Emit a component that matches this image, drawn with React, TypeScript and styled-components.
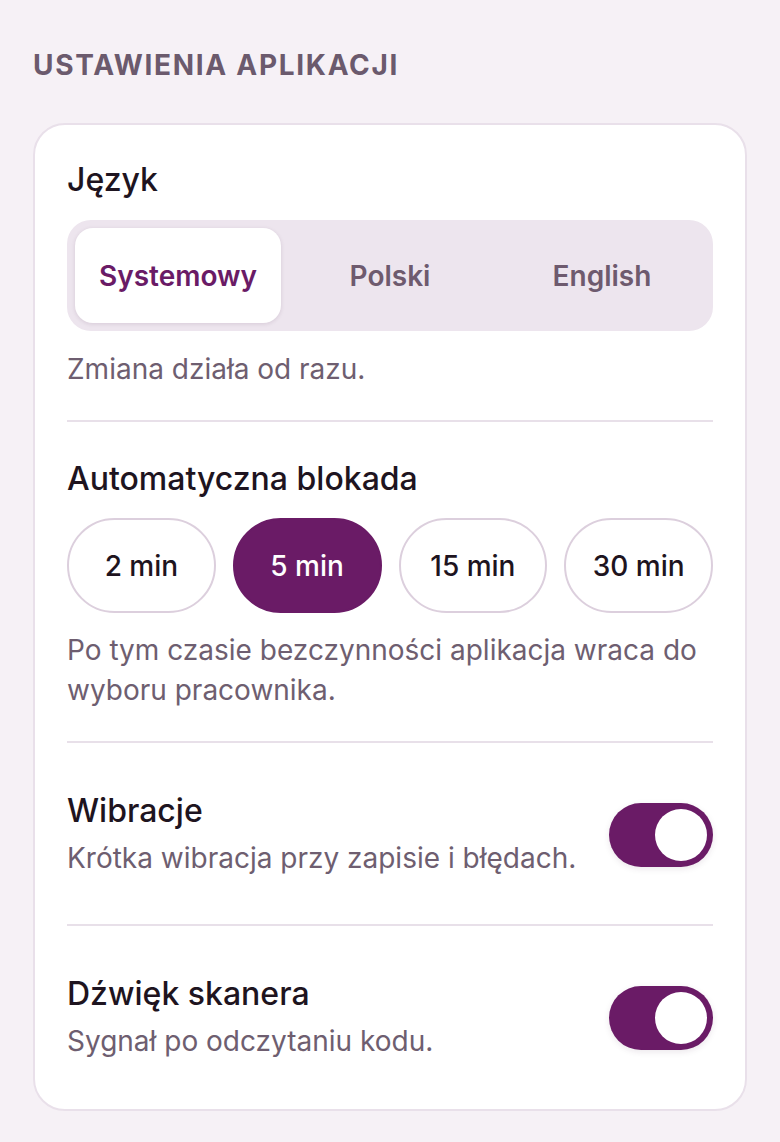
import styled, { createGlobalStyle } from "styled-components";
import { useState } from "react";

const GlobalStyle = createGlobalStyle`
    html, body {
        margin: 0;
        padding: 0;
        background: #f6f1f6;
        font-family: Inter, "Noto Sans", "Liberation Sans", sans-serif;
    }
    * { box-sizing: border-box; }
`;

const languages = ["Systemowy", "Polski", "English"];
const lockTimes = ["2 min", "5 min", "15 min", "30 min"];

const App = () => {
    const [lang, setLang] = useState("Systemowy");
    const [lock, setLock] = useState("5 min");
    const [vibrate, setVibrate] = useState(true);
    const [sound, setSound] = useState(true);

    return (
        <Page>
            <GlobalStyle />
            <Heading>Ustawienia aplikacji</Heading>
            <Card>
                <Section>
                    <Title>Język</Title>
                    <Segmented>
                        {languages.map((l) => (
                            <Segment key={l} $active={lang === l} onClick={() => setLang(l)}>
                                {l}
                            </Segment>
                        ))}
                    </Segmented>
                    <Desc>Zmiana działa od razu.</Desc>
                </Section>
                <Divider />
                <Section>
                    <Title>Automatyczna blokada</Title>
                    <Chips>
                        {lockTimes.map((t) => (
                            <Chip key={t} $active={lock === t} onClick={() => setLock(t)}>
                                {t}
                            </Chip>
                        ))}
                    </Chips>
                    <Desc>Po tym czasie bezczynności aplikacja wraca do wyboru pracownika.</Desc>
                </Section>
                <Divider />
                <ToggleRow>
                    <ToggleText>
                        <Title>Wibracje</Title>
                        <Desc>Krótka wibracja przy zapisie i błędach.</Desc>
                    </ToggleText>
                    <Switch $on={vibrate} onClick={() => setVibrate(!vibrate)}>
                        <Knob />
                    </Switch>
                </ToggleRow>
                <Divider />
                <ToggleRow>
                    <ToggleText>
                        <Title>Dźwięk skanera</Title>
                        <Desc>Sygnał po odczytaniu kodu.</Desc>
                    </ToggleText>
                    <Switch $on={sound} onClick={() => setSound(!sound)}>
                        <Knob />
                    </Switch>
                </ToggleRow>
            </Card>
        </Page>
    );
};

export default App;

const Page = styled.div`
    padding: 49px 33px 32px 33px;
`;

const Heading = styled.h2`
    margin: 0 0 42px 0;
    font-size: 28px;
    line-height: 32px;
    font-weight: 700;
    letter-spacing: 1.7px;
    text-transform: uppercase;
    color: #6b5a6d;
`;

const Card = styled.div`
    background: #fff;
    border: 2px solid #e9e0ea;
    border-radius: 32px;
    padding: 35px 32px 33px 32px;
    display: flex;
    flex-direction: column;
`;

const Section = styled.div`
    display: flex;
    flex-direction: column;
`;

const Title = styled.div`
    font-size: 32px;
    line-height: 40px;
    font-weight: 500;
    color: #1e1420;
`;

const Desc = styled.div`
    font-size: 28px;
    line-height: 40px;
    color: #6e5e70;
`;

const Segmented = styled.div`
    margin: 20px 0 18px 0;
    background: #ede5ee;
    border-radius: 24px;
    padding: 8px;
    display: grid;
    grid-template-columns: repeat(3, 1fr);
    gap: 6px;
    height: 111px;
`;

const Segment = styled.div<{ $active: boolean }>`
    display: flex;
    align-items: center;
    justify-content: center;
    border-radius: 18px;
    font-size: 28px;
    font-weight: 600;
    color: ${(p) => (p.$active ? "#6a1b66" : "#6e5a6e")};
    background: ${(p) => (p.$active ? "#fff" : "transparent")};
    box-shadow: ${(p) => (p.$active ? "0 1px 4px rgba(60, 20, 60, 0.12)" : "none")};
    cursor: pointer;
`;

const Divider = styled.div`
    flex: none;
    height: 2px;
    background: #e8e0e9;
    margin: 31px 0 37px 0;
`;

const Chips = styled.div`
    margin: 19px 0 17px 0;
    display: grid;
    grid-template-columns: repeat(4, 1fr);
    gap: 17px;
`;

const Chip = styled.div<{ $active: boolean }>`
    height: 95px;
    border-radius: 48px;
    display: flex;
    align-items: center;
    justify-content: center;
    font-size: 28px;
    font-weight: 500;
    color: ${(p) => (p.$active ? "#fff" : "#1e1420")};
    background: ${(p) => (p.$active ? "#6a1b66" : "#fff")};
    border: 2px solid ${(p) => (p.$active ? "#6a1b66" : "#dccfdd")};
    cursor: pointer;
`;

const ToggleRow = styled.div`
    display: flex;
    align-items: center;
    justify-content: space-between;
    gap: 20px;
    padding: 11px 0 15px 0;
`;

const ToggleText = styled.div`
    display: flex;
    flex-direction: column;
    gap: 7px;
`;

const Switch = styled.div<{ $on: boolean }>`
    flex: none;
    width: 104px;
    height: 64px;
    border-radius: 32px;
    padding: 6px;
    background: ${(p) => (p.$on ? "#6a1b66" : "#d8ccd9")};
    box-shadow: 0 2px 6px rgba(60, 20, 60, 0.1);
    display: flex;
    justify-content: ${(p) => (p.$on ? "flex-end" : "flex-start")};
    cursor: pointer;
`;

const Knob = styled.div`
    width: 52px;
    height: 52px;
    border-radius: 50%;
    background: #fff;
`;
